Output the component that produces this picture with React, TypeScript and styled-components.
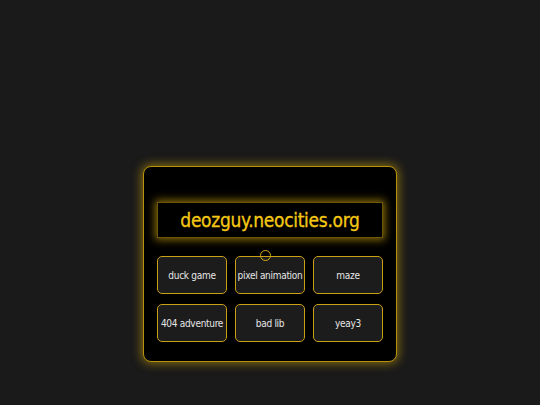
import React from 'react';
import styled, { createGlobalStyle } from 'styled-components';

const Global = createGlobalStyle`
  html, body {
    margin: 0;
    padding: 0;
    background: #1a1a1a;
  }
  body {
    font-family: "Comic Sans MS", "DejaVu Sans Condensed", sans-serif;
  }
`;

const Page = styled.div`
  width: 540px;
  height: 405px;
  display: flex;
  flex-direction: column;
  align-items: center;
  padding-top: 166px;
  box-sizing: border-box;
`;

const Card = styled.div`
  position: relative;
  width: 254px;
  box-sizing: border-box;
  padding: 35px 13px 19px 13px;
  background: #000;
  border: 1.5px solid #b8920e;
  border-radius: 8px;
  box-shadow: 0 0 10px 2px rgba(210, 165, 10, 0.55);
`;

const TitleBar = styled.div`
  height: 34px;
  display: flex;
  align-items: center;
  justify-content: center;
  background: #000;
  border: 1px solid #6d5608;
  box-shadow: 0 0 8px 2px rgba(220, 175, 10, 0.6);
  color: #f5c814;
  font-size: 19px;
  letter-spacing: -0.3px;
  -webkit-text-stroke: 0.3px #f5c814;
  margin-bottom: 18px;
`;

const Grid = styled.div`
  display: grid;
  grid-template-columns: repeat(3, 1fr);
  column-gap: 8px;
  row-gap: 10px;
`;

const Button = styled.button`
  height: 38px;
  background: #1c1c1c;
  border: 1.5px solid #c9a016;
  border-radius: 5px;
  color: #e6e6e6;
  font-family: inherit;
  font-size: 10px;
  letter-spacing: -0.3px;
  white-space: nowrap;
  padding: 0;
  cursor: pointer;
`;

const Cursor = styled.div`
  position: absolute;
  left: 116px;
  top: 83px;
  width: 9px;
  height: 9px;
  border: 1.2px solid #d4aa18;
  border-radius: 50%;
`;

const items = ['duck game', 'pixel animation', 'maze', '404 adventure', 'bad lib', 'yeay3'];

export default function App() {
  return (
    <Page>
      <Global />
      <Card>
        <TitleBar>deozguy.neocities.org</TitleBar>
        <Grid>
          {items.map((label) => (
            <Button key={label}>{label}</Button>
          ))}
        </Grid>
        <Cursor />
      </Card>
    </Page>
  );
}
